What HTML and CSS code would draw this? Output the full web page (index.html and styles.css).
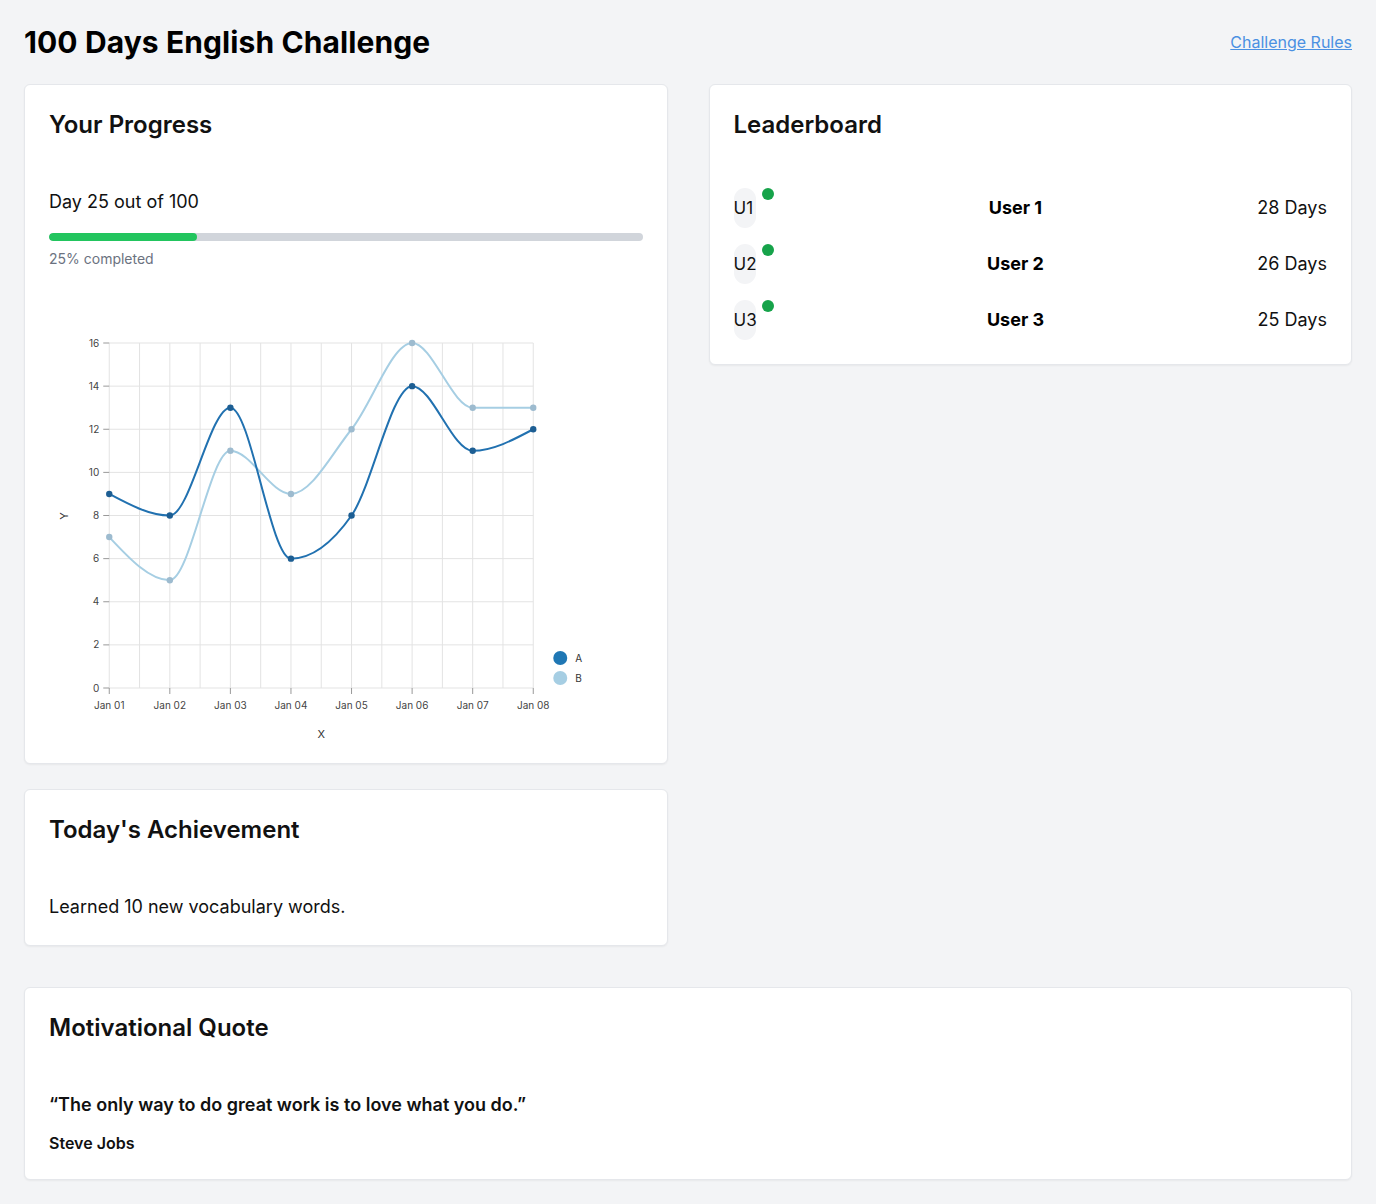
FILE: index.html
```html
<!DOCTYPE html>
<html lang="en">
<head>
<meta charset="utf-8">
<title>100 Days English Challenge</title>
<link rel="stylesheet" href="styles.css">
</head>
<body>
<header class="page-header">
  <h1 class="page-title">100 Days English Challenge</h1>
  <a class="rules-link" href="#">Challenge Rules</a>
</header>

<main class="dashboard">
  <div class="left-col">
    <section class="card">
      <h2 class="card-title">Your Progress</h2>
      <p class="day-text">Day 25 out of 100</p>
      <div class="bar-track"><div class="bar-fill" style="width:25%"></div></div>
      <p class="bar-caption">25% completed</p>
      <svg class="chart" viewBox="49 284 593 455" width="593" height="455" xmlns="http://www.w3.org/2000/svg">
        <g class="grid-v">
          <line x1="109" y1="343" x2="109" y2="688"/>
          <line x1="139.29" y1="343" x2="139.29" y2="688"/>
          <line x1="169.57" y1="343" x2="169.57" y2="688"/>
          <line x1="199.86" y1="343" x2="199.86" y2="688"/>
          <line x1="230.14" y1="343" x2="230.14" y2="688"/>
          <line x1="260.43" y1="343" x2="260.43" y2="688"/>
          <line x1="290.71" y1="343" x2="290.71" y2="688"/>
          <line x1="321" y1="343" x2="321" y2="688"/>
          <line x1="351.29" y1="343" x2="351.29" y2="688"/>
          <line x1="381.57" y1="343" x2="381.57" y2="688"/>
          <line x1="411.86" y1="343" x2="411.86" y2="688"/>
          <line x1="442.14" y1="343" x2="442.14" y2="688"/>
          <line x1="472.43" y1="343" x2="472.43" y2="688"/>
          <line x1="502.71" y1="343" x2="502.71" y2="688"/>
          <line x1="533" y1="343" x2="533" y2="688"/>
        </g>
        <g class="grid-h">
          <line x1="109" y1="343" x2="533" y2="343"/>
          <line x1="109" y1="386.13" x2="533" y2="386.13"/>
          <line x1="109" y1="429.25" x2="533" y2="429.25"/>
          <line x1="109" y1="472.38" x2="533" y2="472.38"/>
          <line x1="109" y1="515.5" x2="533" y2="515.5"/>
          <line x1="109" y1="558.63" x2="533" y2="558.63"/>
          <line x1="109" y1="601.75" x2="533" y2="601.75"/>
          <line x1="109" y1="644.88" x2="533" y2="644.88"/>
          <line x1="109" y1="688" x2="533" y2="688"/>
        </g>
        <g class="ticks">
          <line x1="103" y1="343" x2="109" y2="343"/>
          <line x1="103" y1="386.13" x2="109" y2="386.13"/>
          <line x1="103" y1="429.25" x2="109" y2="429.25"/>
          <line x1="103" y1="472.38" x2="109" y2="472.38"/>
          <line x1="103" y1="515.5" x2="109" y2="515.5"/>
          <line x1="103" y1="558.63" x2="109" y2="558.63"/>
          <line x1="103" y1="601.75" x2="109" y2="601.75"/>
          <line x1="103" y1="644.88" x2="109" y2="644.88"/>
          <line x1="103" y1="688" x2="109" y2="688"/>
          <line x1="109" y1="688" x2="109" y2="694"/>
          <line x1="169.57" y1="688" x2="169.57" y2="694"/>
          <line x1="230.14" y1="688" x2="230.14" y2="694"/>
          <line x1="290.71" y1="688" x2="290.71" y2="694"/>
          <line x1="351.29" y1="688" x2="351.29" y2="694"/>
          <line x1="411.86" y1="688" x2="411.86" y2="694"/>
          <line x1="472.43" y1="688" x2="472.43" y2="694"/>
          <line x1="533" y1="688" x2="533" y2="694"/>
        </g>
        <g class="y-labels">
          <text x="99" y="346.5">16</text>
          <text x="99" y="389.6">14</text>
          <text x="99" y="432.8">12</text>
          <text x="99" y="475.9">10</text>
          <text x="99" y="519">8</text>
          <text x="99" y="562.1">6</text>
          <text x="99" y="605.3">4</text>
          <text x="99" y="648.4">2</text>
          <text x="99" y="691.5">0</text>
        </g>
        <g class="x-labels">
          <text x="109" y="708.5">Jan 01</text>
          <text x="169.57" y="708.5">Jan 02</text>
          <text x="230.14" y="708.5">Jan 03</text>
          <text x="290.71" y="708.5">Jan 04</text>
          <text x="351.29" y="708.5">Jan 05</text>
          <text x="411.86" y="708.5">Jan 06</text>
          <text x="472.43" y="708.5">Jan 07</text>
          <text x="533" y="708.5">Jan 08</text>
        </g>
        <text class="axis-title" x="321" y="738">X</text>
        <text class="axis-title" x="0" y="0" transform="translate(67.5 516) rotate(-90)">Y</text>

        <path class="line-b" d="M109,537.06 C129.19,558.63 149.38,580.19 169.57,580.19 C189.76,580.19 209.95,450.81 230.14,450.81 C250.33,450.81 270.52,493.94 290.71,493.94 C310.9,493.94 331.1,454.41 351.29,429.25 C371.48,404.09 391.67,343 411.86,343 C432.05,343 452.24,407.69 472.43,407.69 C492.62,407.69 512.81,407.69 533,407.69"/>
        <path class="line-a" d="M109,493.94 C129.19,504.72 149.38,515.5 169.57,515.5 C189.76,515.5 209.95,407.69 230.14,407.69 C250.33,407.69 270.52,558.63 290.71,558.63 C310.9,558.63 331.1,544.25 351.29,515.5 C371.48,486.75 391.67,386.13 411.86,386.13 C432.05,386.13 452.24,450.81 472.43,450.81 C492.62,450.81 512.81,440.03 533,429.25"/>

        <g class="pts-b">
          <circle cx="109" cy="537.06" r="3.2"/>
          <circle cx="169.57" cy="580.19" r="3.2"/>
          <circle cx="230.14" cy="450.81" r="3.2"/>
          <circle cx="290.71" cy="493.94" r="3.2"/>
          <circle cx="351.29" cy="429.25" r="3.2"/>
          <circle cx="411.86" cy="343" r="3.2"/>
          <circle cx="472.43" cy="407.69" r="3.2"/>
          <circle cx="533" cy="407.69" r="3.2"/>
        </g>
        <g class="pts-a">
          <circle cx="109" cy="493.94" r="3.2"/>
          <circle cx="169.57" cy="515.5" r="3.2"/>
          <circle cx="230.14" cy="407.69" r="3.2"/>
          <circle cx="290.71" cy="558.63" r="3.2"/>
          <circle cx="351.29" cy="515.5" r="3.2"/>
          <circle cx="411.86" cy="386.13" r="3.2"/>
          <circle cx="472.43" cy="450.81" r="3.2"/>
          <circle cx="533" cy="429.25" r="3.2"/>
        </g>

        <circle class="legend-a" cx="560" cy="658" r="7"/>
        <circle class="legend-b" cx="560" cy="678" r="7"/>
        <text class="legend-text" x="575" y="661.5">A</text>
        <text class="legend-text" x="575" y="681.5">B</text>
      </svg>
    </section>

    <section class="card">
      <h2 class="card-title">Today's Achievement</h2>
      <p class="body-text">Learned 10 new vocabulary words.</p>
    </section>
  </div>

  <section class="card leaderboard">
    <h2 class="card-title">Leaderboard</h2>
    <ul class="leader-list">
      <li class="leader-row">
        <div class="avatar-wrap"><span class="avatar">U1</span><span class="status-dot"></span></div>
        <span class="leader-name">User 1</span>
        <span class="leader-days">28 Days</span>
      </li>
      <li class="leader-row">
        <div class="avatar-wrap"><span class="avatar">U2</span><span class="status-dot"></span></div>
        <span class="leader-name">User 2</span>
        <span class="leader-days">26 Days</span>
      </li>
      <li class="leader-row">
        <div class="avatar-wrap"><span class="avatar">U3</span><span class="status-dot"></span></div>
        <span class="leader-name">User 3</span>
        <span class="leader-days">25 Days</span>
      </li>
    </ul>
  </section>

  <section class="card quote-card">
    <h2 class="card-title">Motivational Quote</h2>
    <p class="quote-text">“The only way to do great work is to love what you do.”</p>
    <p class="quote-author">Steve Jobs</p>
  </section>
</main>
</body>
</html>
```

FILE: styles.css
```css
* { box-sizing: border-box; }

body {
  margin: 0;
  padding: 24px;
  background: #f3f4f6;
  font-family: Inter, "Noto Sans", "Liberation Sans", sans-serif;
  color: #111;
}

.page-header {
  display: flex;
  justify-content: space-between;
  align-items: center;
  margin-bottom: 24px;
}

.page-title {
  margin: 0;
  font-size: 30px;
  line-height: 36px;
  font-weight: 700;
  letter-spacing: 0.1px;
  color: #000;
}

.rules-link {
  font-size: 16px;
  line-height: 24px;
  color: #4a90e2;
  text-decoration: underline;
}

.dashboard {
  display: grid;
  grid-template-columns: 1fr 1fr;
  column-gap: 41px;
  row-gap: 41px;
  align-items: start;
}

.left-col {
  display: flex;
  flex-direction: column;
  gap: 25px;
}

.card {
  background: #fff;
  border: 1px solid #e5e7eb;
  border-radius: 6px;
  box-shadow: 0 1px 2px rgba(0, 0, 0, 0.05);
  padding: 24px;
}

.card-title {
  margin: 0 0 47px;
  font-size: 24px;
  line-height: 32px;
  font-weight: 600;
  color: #111;
}

.day-text,
.body-text {
  margin: 0;
  font-size: 18px;
  line-height: 28px;
  color: #111;
}

.bar-track {
  margin-top: 17px;
  height: 8px;
  border-radius: 4px;
  background: #d1d5db;
  overflow: hidden;
}

.bar-fill {
  height: 100%;
  border-radius: 4px;
  background: #22c55e;
}

.bar-caption {
  margin: 8px 0 0;
  font-size: 14px;
  line-height: 20px;
  color: #6b7280;
}

.chart {
  display: block;
  margin-top: 15px;
  width: 100%;
  height: 455px;
  overflow: visible;
}

.grid-v line,
.grid-h line {
  stroke: #e3e3e3;
  stroke-width: 1;
}

.ticks line {
  stroke: #999;
  stroke-width: 1;
}

.y-labels text {
  font-family: Inter, "Liberation Sans", sans-serif;
  font-size: 10px;
  fill: #444;
  text-anchor: end;
}

.x-labels text {
  font-family: Inter, "Liberation Sans", sans-serif;
  font-size: 10px;
  fill: #444;
  text-anchor: middle;
}

.axis-title {
  font-family: Inter, "Liberation Sans", sans-serif;
  font-size: 11px;
  fill: #333;
  text-anchor: middle;
}

.line-a {
  fill: none;
  stroke: #2171b0;
  stroke-width: 2;
}

.line-b {
  fill: none;
  stroke: #a6cee3;
  stroke-width: 2;
}

.pts-a circle { fill: #1d5e93; }
.pts-b circle { fill: #9dbbcf; }

.legend-a { fill: #1f77b4; }
.legend-b { fill: #a6cee3; }

.legend-text {
  font-family: Inter, "Liberation Sans", sans-serif;
  font-size: 10px;
  fill: #333;
}

.leaderboard {
  grid-column: 2;
  grid-row: 1;
}

.leader-list {
  list-style: none;
  margin: 0;
  padding: 0;
  display: flex;
  flex-direction: column;
  gap: 16px;
}

.leader-row {
  display: flex;
  justify-content: space-between;
  align-items: center;
  height: 40px;
}

.avatar-wrap {
  position: relative;
  width: 40px;
  height: 40px;
}

.avatar {
  display: flex;
  align-items: center;
  width: 22px;
  height: 40px;
  border-radius: 11px;
  background: #f3f4f6;
  font-size: 17px;
  line-height: 24px;
  color: #111;
  white-space: nowrap;
}

.status-dot {
  position: absolute;
  top: 0;
  right: 0;
  width: 12px;
  height: 12px;
  border-radius: 50%;
  background: #16a34a;
}

.leader-name {
  font-size: 18px;
  line-height: 28px;
  font-weight: 700;
  color: #000;
}

.leader-days {
  font-size: 18px;
  line-height: 28px;
  color: #111;
}

.quote-card {
  grid-column: 1 / span 2;
}

.quote-text {
  margin: 0;
  font-size: 18px;
  line-height: 28px;
  font-weight: 600;
  color: #111;
}

.quote-author {
  margin: 12px 0 0;
  font-size: 16px;
  line-height: 24px;
  font-weight: 600;
  color: #111;
}
```
